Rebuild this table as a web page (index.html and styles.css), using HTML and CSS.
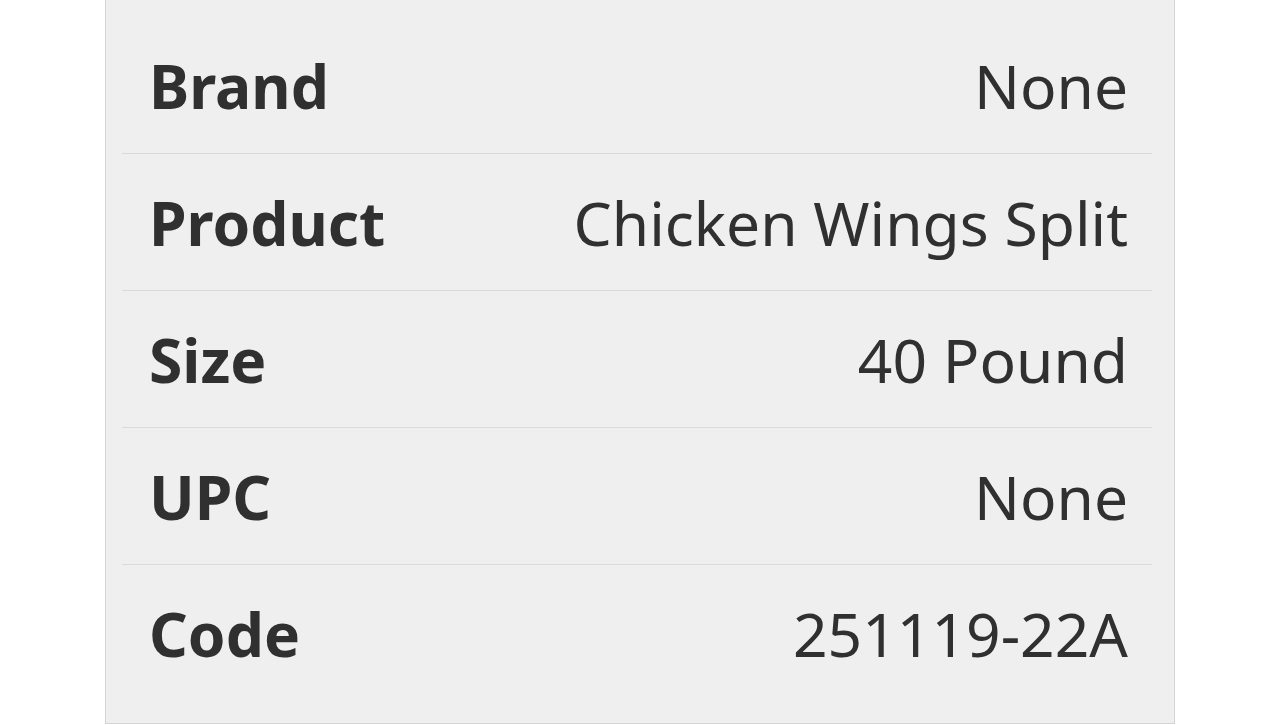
FILE: index.html
```html
<!DOCTYPE html>
<html lang="en">
<head>
    <meta charset="UTF-8">
    <meta name="viewport" content="width=device-width, initial-scale=1.0">
    <title>Product Details</title>
    <link rel="stylesheet" href="styles.css">
</head>
<body>
    <div class="details">
        <div class="detail-row">
            <span class="detail-label">Brand</span>
            <span class="detail-value">None</span>
        </div>
        <div class="detail-row">
            <span class="detail-label">Product</span>
            <span class="detail-value">Chicken Wings Split</span>
        </div>
        <div class="detail-row">
            <span class="detail-label">Size</span>
            <span class="detail-value">40 Pound</span>
        </div>
        <div class="detail-row">
            <span class="detail-label">UPC</span>
            <span class="detail-value">None</span>
        </div>
        <div class="detail-row">
            <span class="detail-label">Code</span>
            <span class="detail-value">251119-22A</span>
        </div>
    </div>
</body>
</html>
```

FILE: styles.css
```css
body {
    margin: 0;
    background-color: #fff;
    font-family: "Noto Sans", "Open Sans", Arial, sans-serif;
    color: #303030;
}
.details {
    box-sizing: border-box;
    width: 1070px;
    margin: 0 auto;
    padding: 17px 22px 22px 16px;
    background-color: #efefef;
    border: 1px solid #d4d4d4;
    border-top: none;
}
.detail-row {
    display: flex;
    justify-content: space-between;
    align-items: center;
    height: 136px;
    padding: 0 24px 0 27px;
    border-bottom: 1px solid #dadada;
    font-size: 60.5px;
}
.detail-row:last-child {
    border-bottom: none;
}
.detail-label {
    font-weight: bold;
}
```
